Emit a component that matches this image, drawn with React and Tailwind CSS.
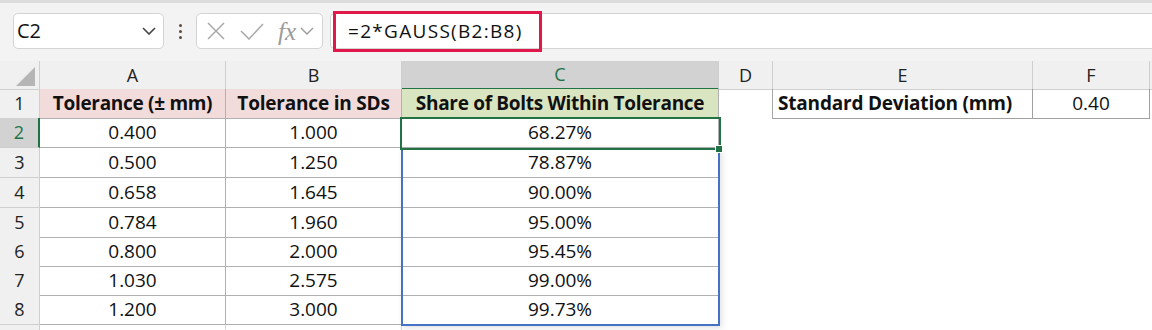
import React from "react";

const cols = ["A", "B", "C", "D", "E", "F"];
const rowH = ["h-[29px]", "h-[30px]", "h-[30px]", "h-[30px]", "h-[29px]", "h-[29px]", "h-[29px]", "h-[30px]"];
const data = [
  ["0.400", "1.000", "68.27%"],
  ["0.500", "1.250", "78.87%"],
  ["0.658", "1.645", "90.00%"],
  ["0.784", "1.960", "95.00%"],
  ["0.800", "2.000", "95.45%"],
  ["1.030", "2.575", "99.00%"],
  ["1.200", "3.000", "99.73%"],
];

function Toolbar() {
  return (
    <div className="relative">
      <div className="h-[3px] bg-[#dcdcdc]" />
      <div className="h-[58px] bg-[#f3f3f3] pt-[10px]">
        <div className="flex h-[36px] items-stretch">
          <div className="ml-[13px] w-[151px] rounded-[5px] border border-[#d4d4d4] bg-white flex items-center pl-[3px] pr-[7px]">
            <span className="text-[20px] text-[#111] leading-none">C2</span>
            <svg className="ml-auto" width="14" height="8" viewBox="0 0 14 8">
              <path d="M1 1 L7 7 L13 1" fill="none" stroke="#444" strokeWidth="1.6" />
            </svg>
          </div>
          <div className="w-[32px] flex flex-col items-center justify-center gap-[3px]">
            <div className="w-[3px] h-[3px] rounded-full bg-[#5a4b3d]" />
            <div className="w-[3px] h-[3px] rounded-full bg-[#5a4b3d]" />
            <div className="w-[3px] h-[3px] rounded-full bg-[#5a4b3d]" />
          </div>
          <div className="w-[127px] rounded-[5px] border border-[#d4d4d4] bg-white flex items-center pl-[9px]">
            <svg width="20" height="20" viewBox="0 0 20 20">
              <path d="M2 2 L18 18 M18 2 L2 18" fill="none" stroke="#a8a8a8" strokeWidth="1.5" />
            </svg>
            <svg className="ml-[14px]" width="24" height="18" viewBox="0 0 24 18">
              <path d="M1 9 L9 17 L23 2" fill="none" stroke="#a8a8a8" strokeWidth="1.5" />
            </svg>
            <span className="ml-[14px] italic text-[#9a9a9a] text-[25px] leading-none font-['Liberation_Serif',serif]">fx</span>
            <svg className="ml-[4px]" width="14" height="8" viewBox="0 0 14 8">
              <path d="M1 1 L7 7 L13 1" fill="none" stroke="#9a9a9a" strokeWidth="1.4" />
            </svg>
          </div>
          <div className="ml-[7px] flex-1 rounded-l-[5px] border-y border-l border-[#d4d4d4] bg-white flex items-center pl-[17px]">
            <span className="text-[19px] text-[#111] tracking-[1.3px] leading-none">=2*GAUSS(B2:B8)</span>
          </div>
        </div>
      </div>
      <div className="absolute left-[333px] top-[11px] w-[209px] h-[41px] border-[3px] border-[#e0194a]" />
    </div>
  );
}

const hdr = "bg-[#f0f0f0] border-r border-b border-[#cfcfcf] flex items-center justify-center text-[18px] text-[#222]";
const cell = "border-r border-b border-[#b0b0b0] flex items-center justify-center text-[19px] text-[#111]";

function Sheet() {
  const gridCls = "grid grid-cols-[40px_186px_176px_317px_54px_260px_117px_2px]";
  return (
    <div className="relative">
      {/* header row */}
      <div className={gridCls + " h-[28px]"}>
        <div className="bg-[#f0f0f0] border-r border-b border-[#cfcfcf] relative">
          <svg className="absolute left-[16px] top-[5px]" width="20" height="20" viewBox="0 0 20 20">
            <path d="M0 20 L19 20 L19 1 Z" fill="#b5b5b5" />
          </svg>
        </div>
        {cols.map((c) =>
          c === "C" ? (
            <div
              key={c}
              className="bg-[#d2d2d2] border-r border-[#cfcfcf] border-b-2 border-b-[#217346] flex items-center justify-center text-[18px] text-[#217346]"
            >
              {c}
            </div>
          ) : (
            <div key={c} className={hdr}>
              {c}
            </div>
          )
        )}
        <div className="bg-[#f0f0f0] border-b border-[#cfcfcf]" />
      </div>

      {/* row 1 */}
      <div className={gridCls + " " + rowH[0]}>
        <div className={hdr}>1</div>
        <div className={cell + " bg-[#f2dcdb] font-bold tracking-[-0.3px]"}>Tolerance (± mm)</div>
        <div className={cell + " bg-[#f2dcdb] font-bold tracking-[-0.2px]"}>Tolerance in SDs</div>
        <div className={cell + " bg-[#d9e5c0] font-bold tracking-[-0.3px]"}>Share of Bolts Within Tolerance</div>
        <div className="border-r border-b-0 border-[#a8a8a8]" />
        <div className="border-r border-b border-[#a0a0a0] flex items-center pl-[5px] text-[19px] font-bold text-[#111] tracking-[-0.2px]">Standard Deviation (mm)</div>
        <div className="border-r border-b border-[#a0a0a0] flex items-center justify-center text-[19px] text-[#111]">0.40</div>
        <div />
      </div>

      {data.map((r, i) => {
        const sel = i === 0;
        return (
          <div key={i} className={gridCls + " " + rowH[i + 1]}>
            <div
              className={
                sel
                  ? "bg-[#d2d2d2] border-r-2 border-r-[#217346] border-b border-b-[#cfcfcf] flex items-center justify-center text-[18px] text-[#217346]"
                  : hdr
              }
            >
              {i + 2}
            </div>
            <div className={cell}>{r[0]}</div>
            <div className={cell}>{r[1]}</div>
            <div className={cell}>{r[2]}</div>
            <div />
            <div />
            <div />
            <div />
          </div>
        );
      })}

      <div className={gridCls + " h-[10px]"}>
        <div className="bg-[#f0f0f0] border-r border-[#cfcfcf]" />
        <div className="border-r border-[#dadada]" />
        <div className="border-r border-[#dadada]" />
        <div />
        <div />
        <div />
        <div />
        <div />
      </div>

      {/* selection overlays */}
      <div className="absolute left-[401px] top-[87px] w-[319px] h-[178px] border-2 border-[#4472c4] shadow-[2px_2px_6px_rgba(0,0,0,0.12)] pointer-events-none" />
      <div className="absolute left-[400px] top-[56px] w-[321px] h-[33px] border-2 border-[#217346] pointer-events-none" />
      <div className="absolute left-[715px] top-[84px] w-[8px] h-[8px] bg-[#217346] border border-white pointer-events-none" />
    </div>
  );
}

export default function App() {
  return (
    <div className="w-[1152px] h-[330px] overflow-hidden bg-white font-['Open_Sans',sans-serif]">
      <Toolbar />
      <Sheet />
    </div>
  );
}
